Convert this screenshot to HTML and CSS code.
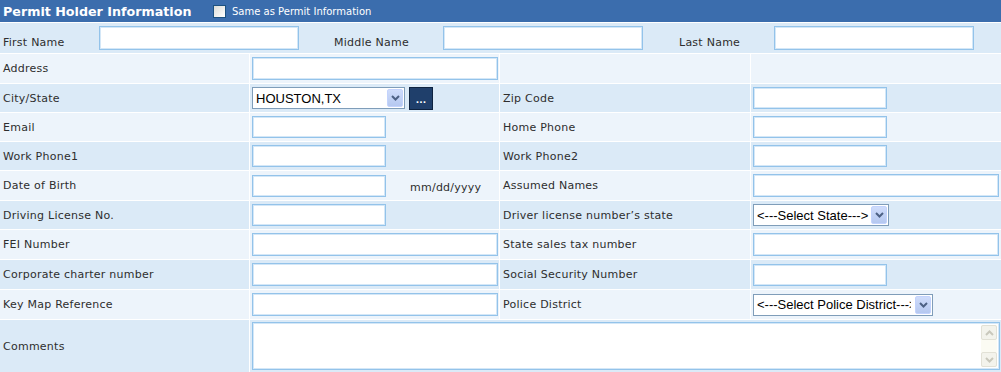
FILE: index.html
```html
<!DOCTYPE html>
<html lang="en">
<head>
   <meta charset="UTF-8">
   <title>Permit Holder Information</title>
   <link rel="stylesheet" href="styles.css">
</head>
<body>
<div class="panel">
   <div class="panel-head">
      <span class="panel-title">Permit Holder Information</span>
      <label class="same"><input type="checkbox" class="check">Same as Permit Information</label>
   </div>

   <div class="name-row">
      <div class="lbl">First Name</div>
      <div><input type="text" class="txt name"></div>
      <div class="lbl">Middle Name</div>
      <div><input type="text" class="txt name"></div>
      <div class="lbl">Last Name</div>
      <div><input type="text" class="txt name"></div>
   </div>

   <div class="row light h29">
      <div class="lbl">Address</div>
      <div class="fld"><input type="text" class="txt wide"></div>
      <div></div>
      <div></div>
   </div>
   <div class="row dark">
      <div class="lbl">City/State</div>
      <div class="fld">
         <span class="sel city"><select><option>HOUSTON,TX</option></select><span class="arrow"><svg width="9" height="6" viewBox="0 0 9 6"><path d="M1 1l3.5 3.5L8 1" fill="none" stroke="#4d6185" stroke-width="2"/></svg></span></span>
         <button type="button" class="dots">...</button>
      </div>
      <div class="lbl">Zip Code</div>
      <div class="fld"><input type="text" class="txt short"></div>
   </div>
   <div class="row light">
      <div class="lbl">Email</div>
      <div class="fld"><input type="text" class="txt short"></div>
      <div class="lbl">Home Phone</div>
      <div class="fld"><input type="text" class="txt short"></div>
   </div>
   <div class="row dark">
      <div class="lbl">Work Phone1</div>
      <div class="fld"><input type="text" class="txt short"></div>
      <div class="lbl">Work Phone2</div>
      <div class="fld"><input type="text" class="txt short"></div>
   </div>
   <div class="row light h29">
      <div class="lbl">Date of Birth</div>
      <div class="fld"><input type="text" class="txt short"><span class="hint">mm/dd/yyyy</span></div>
      <div class="lbl">Assumed Names</div>
      <div class="fld"><input type="text" class="txt wide"></div>
   </div>
   <div class="row dark">
      <div class="lbl">Driving License No.</div>
      <div class="fld"><input type="text" class="txt short"></div>
      <div class="lbl">Driver license number’s state</div>
      <div class="fld">
         <span class="sel state"><select><option>&lt;---Select State---&gt;</option></select><span class="arrow"><svg width="9" height="6" viewBox="0 0 9 6"><path d="M1 1l3.5 3.5L8 1" fill="none" stroke="#4d6185" stroke-width="2"/></svg></span></span>
      </div>
   </div>
   <div class="row light h29">
      <div class="lbl">FEI Number</div>
      <div class="fld"><input type="text" class="txt wide"></div>
      <div class="lbl">State sales tax number</div>
      <div class="fld"><input type="text" class="txt wide"></div>
   </div>
   <div class="row dark h29">
      <div class="lbl">Corporate charter number</div>
      <div class="fld"><input type="text" class="txt wide"></div>
      <div class="lbl">Social Security Number</div>
      <div class="fld"><input type="text" class="txt short"></div>
   </div>
   <div class="row light h29">
      <div class="lbl">Key Map Reference</div>
      <div class="fld"><input type="text" class="txt wide"></div>
      <div class="lbl">Police District</div>
      <div class="fld">
         <span class="sel police"><select><option>&lt;---Select Police District---&gt;</option></select><span class="arrow"><svg width="9" height="6" viewBox="0 0 9 6"><path d="M1 1l3.5 3.5L8 1" fill="none" stroke="#4d6185" stroke-width="2"/></svg></span></span>
      </div>
   </div>
   <div class="row dark comments">
      <div class="lbl">Comments</div>
      <div class="fld">
         <div class="memo">
            <textarea></textarea>
            <div class="vscroll">
               <span class="sbtn"><svg width="9" height="6" viewBox="0 0 9 6"><path d="M1 5l3.5-3.5L8 5" fill="none" stroke="#c9c8bc" stroke-width="2"/></svg></span>
               <span class="sbtn"><svg width="9" height="6" viewBox="0 0 9 6"><path d="M1 1l3.5 3.5L8 1" fill="none" stroke="#c9c8bc" stroke-width="2"/></svg></span>
            </div>
         </div>
      </div>
   </div>
</div>
</body>
</html>
```

FILE: styles.css
```css
* {
   box-sizing: border-box;
}
body {
   margin: 0;
   font-family: "DejaVu Sans", Verdana, sans-serif;
   font-size: 11px;
   letter-spacing: 0.25px;
   color: #2e2e2e;
   background-color: #fff;
}
.panel {
   display: flex;
   flex-direction: column;
   gap: 1px;
   background-color: #fff;
   height: 372px;
   overflow: hidden;
}
.panel > div {
   flex-shrink: 0;
}
.panel-head {
   height: 22px;
   background-color: #3b6dad;
   display: flex;
   align-items: center;
   padding-left: 3px;
   color: #fff;
}
.panel-title {
   font-weight: bold;
   font-size: 12.7px;
   letter-spacing: 0;
   width: 210px;
}
.same {
   display: flex;
   align-items: center;
   font-size: 10px;
   letter-spacing: 0;
   margin-top: 1px;
}
.check {
   appearance: none;
   width: 13px;
   height: 13px;
   margin: 0 6px 0 0;
   border: 1px solid #1c5180;
   background: linear-gradient(135deg, #dcdcd7, #fff);
}

/* first / middle / last name */
.name-row {
   height: 30px;
   display: grid;
   grid-template-columns: 99px 232px 112px 233px 98px 1fr;
   align-items: center;
   background-color: #dbeaf7;
}
.name-row .lbl {
   padding-top: 8px;
}
.lbl {
   padding-left: 3px;
   white-space: nowrap;
}

.row {
   display: grid;
   grid-template-columns: 249px 249px 250px 1fr;
   column-gap: 1px;
   height: 28px;
}
.row.h29 {
   height: 29px;
}
.row > div {
   display: flex;
   align-items: center;
}
.row.dark > div {
   background-color: #dbeaf7;
}
.row.light > div {
   background-color: #edf4fb;
}
.fld {
   padding-left: 2px;
}

.txt {
   border: 1px solid #93c3ea;
   box-shadow: inset 0 0 0 1px #d4e7f7;
   background-color: #fff;
   height: 22px;
   padding: 0 3px;
   font-family: inherit;
   font-size: 11px;
}
.txt.name {
   width: 200px;
   height: 24px;
}
.txt.wide {
   width: 246px;
   height: 23px;
}
.txt.short {
   width: 134px;
}
.hint {
   margin-left: 24px;
   margin-top: 3px;
}

.sel {
   display: inline-flex;
   align-items: center;
   height: 22px;
   border: 1px solid #7f9db9;
   background-color: #fff;
   padding-right: 1px;
}
.sel select {
   appearance: none;
   border: none;
   background: transparent;
   font-family: "Liberation Sans", Arial, sans-serif;
   font-size: 13px;
   letter-spacing: 0;
   color: #000;
   padding: 0 0 0 3px;
   flex: 1;
   min-width: 0;
   outline: none;
}
.sel.city {
   width: 153px;
}
.sel.state {
   width: 136px;
}
.sel.police {
   width: 180px;
}
.sel.police select {
   padding-right: 4px;
   overflow: hidden;
}
.arrow {
   flex: none;
   width: 16px;
   height: 18px;
   border: 1px solid #c3d3fd;
   border-radius: 2px;
   background: linear-gradient(#cfdcfb, #b5c8f0);
   display: flex;
   align-items: center;
   justify-content: center;
}
.dots {
   margin-left: 4px;
   width: 24px;
   height: 23px;
   padding: 0 0 4px;
   background-color: #1f3f6b;
   border: 1px solid #0e2340;
   color: #fff;
   font-family: "DejaVu Sans", Verdana, sans-serif;
   font-size: 9px;
   font-weight: bold;
   display: flex;
   align-items: flex-end;
   justify-content: center;
}

.row.comments {
   height: 52px;
   grid-template-columns: 249px 1fr;
}
.memo {
   display: flex;
   width: 748px;
   height: 48px;
   border: 1px solid #93c3ea;
   box-shadow: inset 0 0 0 1px #d4e7f7;
   background-color: #fff;
}
.memo textarea {
   flex: 1;
   border: none;
   resize: none;
   background: transparent;
   outline: none;
}
.vscroll {
   flex: none;
   width: 16px;
   margin: 2px 2px 2px 0;
   background-color: #fbfbf3;
   display: flex;
   flex-direction: column;
   justify-content: space-between;
}
.sbtn {
   height: 15px;
   border: 1px solid #e2e1d6;
   border-radius: 2px;
   background-color: #f3f3ec;
   display: flex;
   align-items: center;
   justify-content: center;
}
```
